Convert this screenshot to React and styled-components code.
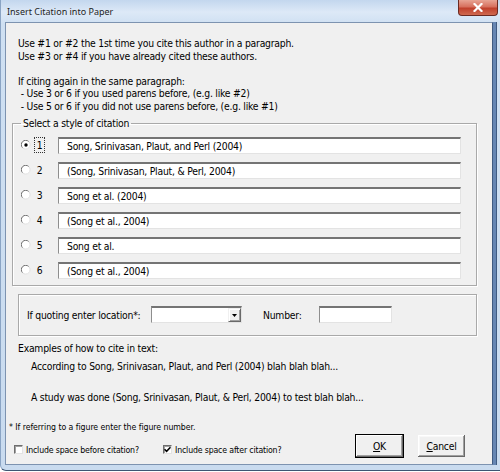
import React from 'react';
import styled, { createGlobalStyle } from 'styled-components';

const Global = createGlobalStyle`
  html, body { margin: 0; padding: 0; background: #ffffff; }
  body { width: 500px; height: 472px; overflow: hidden; font-family: "DejaVu Sans Condensed", "Liberation Sans", Arial, sans-serif; }
  * { box-sizing: border-box; }
`;

const Window = styled.div`
  width: 500px;
  height: 471px;
  display: flex;
  flex-direction: column;
  background: linear-gradient(180deg, #c3d7ee 0px, #dde9f7 12px, #cfe0f2 24px, #c9dbef 100%);
  border-bottom: 1px solid #3e5673;
  border-left: 1px solid #8aa4c4;
  border-bottom-left-radius: 6px;
  overflow: hidden;
`;

const TitleBar = styled.div`
  height: 22px;
  display: flex;
  align-items: flex-start;
  justify-content: space-between;
  padding-left: 6px;
`;

const Title = styled.div`
  font-family: "Noto Sans", "Open Sans", sans-serif;
  font-size: 9px;
  line-height: 24px;
  color: #1e1e1e;
`;

const CloseButton = styled.div`
  width: 40px;
  height: 16px;
  margin-right: 2px;
  border: 1px solid #6b2a22;
  border-top: none;
  border-radius: 0 0 4px 4px;
  background: linear-gradient(180deg, #e8a494 0%, #d7705e 45%, #c0402c 55%, #cf6a50 100%);
  display: flex;
  align-items: center;
  justify-content: center;
`;

const Client = styled.div`
  flex: 1;
  margin: 0 7px 5px 4px;
  background: #f0f0f0;
  border: 1px solid #7d93b0;
  border-right-color: #3f5b82;
  box-shadow: 3px 0 0 #6686b3, 4px 0 0 #3f5b82;
  display: flex;
  flex-direction: column;
  font-size: 10.3px;
  letter-spacing: -0.22px;
  color: #000;
`;

const Instructions = styled.div`
  margin: 14px 0 0 12px;
  line-height: 12.6px;
  white-space: pre;
`;

const GroupBox = styled.fieldset`
  margin: 4px 15px 0 6px;
  padding: 3px 0 2px 8px;
  border: 1px solid #a9a9a9;
  box-shadow: inset 1px 1px 0 #ffffff, 1px 1px 0 #ffffff;
  min-width: 0;
`;

const Legend = styled.legend`
  margin-left: 0;
  padding: 0 2px;
  line-height: 13px;
`;

const Row = styled.div`
  height: 25px;
  display: flex;
  align-items: center;
`;

const RadioWrap = styled.div`
  width: 10px;
  height: 10px;
  display: flex;
`;

const Num = styled.span`
  margin-left: 3px;
  width: 11px;
  height: 16px;
  display: flex;
  align-items: center;
  justify-content: center;
  border: 1px ${p => (p.$focus ? 'dotted #333' : 'solid transparent')};
`;

const TextBox = styled.div`
  height: 17px;
  width: ${p => p.$w || 403}px;
  margin-left: ${p => p.$ml || 0}px;
  background: #ffffff;
  border-top: 2px solid #747474;
  border-left: 1px solid #8e8e8e;
  border-bottom: 1px solid #e3e3e3;
  border-right: 1px solid #e3e3e3;
  padding-left: 8px;
  display: flex;
  align-items: center;
  line-height: 14px;
  white-space: nowrap;
`;

const QuoteBox = styled.div`
  margin: 8px 15px 0 12px;
  height: 42px;
  border: 1px solid #a9a9a9;
  box-shadow: inset 1px 1px 0 #ffffff, 1px 1px 0 #ffffff;
  display: flex;
  align-items: center;
  padding-left: 8px;
`;

const Label = styled.span`
  width: ${p => p.$w}px;
  margin-left: ${p => p.$ml || 0}px;
  white-space: nowrap;
`;

const Combo = styled.div`
  width: 91px;
  height: 17px;
  background: #fff;
  border-top: 2px solid #747474;
  border-left: 1px solid #8e8e8e;
  border-bottom: 1px solid #e3e3e3;
  border-right: 1px solid #e3e3e3;
  display: flex;
  justify-content: flex-end;
`;

const DropButton = styled.div`
  width: 13px;
  height: 100%;
  background: #f0f0f0;
  border-top: 1px solid #f0f0f0;
  border-left: 1px solid #f0f0f0;
  border-right: 1px solid #696969;
  border-bottom: 1px solid #696969;
  box-shadow: inset 1px 1px 0 #fff, inset -1px -1px 0 #a0a0a0;
  display: flex;
  align-items: center;
  justify-content: center;
`;

const Examples = styled.div`
  margin: 5px 0 0 12px;
  line-height: 14px;
`;

const Example = styled.div`
  margin: ${p => p.$mt}px 0 0 25px;
  line-height: 14px;
  white-space: nowrap;
`;

const Footnote = styled.div`
  margin: 17px 0 0 3px;
  font-size: 8.7px;
  letter-spacing: -0.05px;
  line-height: 12px;
  white-space: nowrap;
`;

const Footer = styled.div`
  margin-top: 1px;
  display: flex;
  align-items: flex-start;
  padding-left: 8px;
`;

const CheckItem = styled.label`
  display: flex;
  align-items: center;
  width: ${p => p.$w}px;
  margin-top: 10px;
  font-size: 8.7px;
  letter-spacing: -0.15px;
  line-height: 12px;
  white-space: nowrap;
`;

const CheckBox = styled.span`
  width: 9px;
  height: 9px;
  background: #fff;
  border-top: 1px solid #6e6e6e;
  border-left: 1px solid #6e6e6e;
  border-bottom: 1px solid #e3e3e3;
  border-right: 1px solid #e3e3e3;
  box-shadow: inset 1px 1px 0 #a0a0a0;
  margin-right: 3px;
  display: flex;
  align-items: center;
  justify-content: center;
`;

const Buttons = styled.div`
  margin-left: auto;
  margin-right: 26px;
  display: flex;
  gap: 13px;
`;

const Button = styled.div`
  width: 49px;
  height: 24px;
  display: flex;
  align-items: center;
  justify-content: center;
  background: #f0f0f0;
  font-size: 10.3px;
  border: 1px solid ${p => (p.$default ? '#000' : 'transparent')};
  box-shadow: ${p =>
    p.$default
      ? 'inset -1px -1px 0 #696969, inset 1px 1px 0 #ffffff, inset -2px -2px 0 #a0a0a0'
      : 'inset -1px -1px 0 #696969, inset 1px 1px 0 #ffffff, inset -2px -2px 0 #a0a0a0, inset 2px 2px 0 #f8f8f8'};
  u { text-decoration: underline; }
`;

function Radio({ checked }) {
  return (
    <RadioWrap>
      <svg width="10" height="10" viewBox="0 0 10 10">
        <circle cx="5" cy="5" r="4.3" fill="#fff" />
        <path d="M1.6 7.8 A4.3 4.3 0 0 1 7.8 1.6" fill="none" stroke="#707070" strokeWidth="1" />
        <path d="M7.8 1.6 A4.3 4.3 0 0 1 1.6 7.8" fill="none" stroke="#dedede" strokeWidth="1" />
        {checked && <circle cx="5" cy="5" r="1.7" fill="#000" />}
      </svg>
    </RadioWrap>
  );
}

const rows = [
  'Song, Srinivasan, Plaut, and Perl (2004)',
  '(Song, Srinivasan, Plaut, & Perl, 2004)',
  'Song et al. (2004)',
  '(Song et al., 2004)',
  'Song et al.',
  '(Song et al., 2004)',
];

export default function App() {
  return (
    <>
      <Global />
      <Window>
        <TitleBar>
          <Title>Insert Citation into Paper</Title>
          <CloseButton>
            <svg width="10" height="9" viewBox="0 0 10 9">
              <path d="M1.5 1 L8.5 8 M8.5 1 L1.5 8" stroke="#ffffff" strokeWidth="2.2" strokeLinecap="square" />
            </svg>
          </CloseButton>
        </TitleBar>
        <Client>
          <Instructions>
            {`Use #1 or #2 the 1st time you cite this author in a paragraph.
Use #3 or #4 if you have already cited these authors.

If citing again in the same paragraph:
 - Use 3 or 6 if you used parens before, (e.g. like #2)
 - Use 5 or 6 if you did not use parens before, (e.g. like #1)`}
          </Instructions>
          <GroupBox>
            <Legend>Select a style of citation</Legend>
            {rows.map((r, i) => (
              <Row key={i}>
                <Radio checked={i === 0} />
                <Num $focus={i === 0}>{i + 1}</Num>
                <TextBox $ml={13}>{r}</TextBox>
              </Row>
            ))}
          </GroupBox>
          <QuoteBox>
            <Label $w={124}>If quoting enter location*:</Label>
            <Combo>
              <DropButton>
                <svg width="5" height="3" viewBox="0 0 5 3">
                  <path d="M0 0 H5 L2.5 3 Z" fill="#000" />
                </svg>
              </DropButton>
            </Combo>
            <Label $w={56} $ml={21}>Number:</Label>
            <TextBox $w={73} />
          </QuoteBox>
          <Examples>Examples of how to cite in text:</Examples>
          <Example $mt={4}>According to Song, Srinivasan, Plaut, and Perl (2004) blah blah blah...</Example>
          <Example $mt={17}>A study was done (Song, Srinivasan, Plaut, &amp; Perl, 2004) to test blah blah...</Example>
          <Footnote>* If referring to a figure enter the figure number.</Footnote>
          <Footer>
            <CheckItem $w={149}>
              <CheckBox />
              Include space before citation?
            </CheckItem>
            <CheckItem $w={150}>
              <CheckBox>
                <svg width="7" height="7" viewBox="0 0 7 7">
                  <path d="M0.5 3.2 L2.6 5.3 L6.5 1.2" fill="none" stroke="#000" strokeWidth="1.6" />
                </svg>
              </CheckBox>
              Include space after citation?
            </CheckItem>
            <Buttons>
              <Button $default><span><u>O</u>K</span></Button>
              <Button><span><u>C</u>ancel</span></Button>
            </Buttons>
          </Footer>
        </Client>
      </Window>
    </>
  );
}
